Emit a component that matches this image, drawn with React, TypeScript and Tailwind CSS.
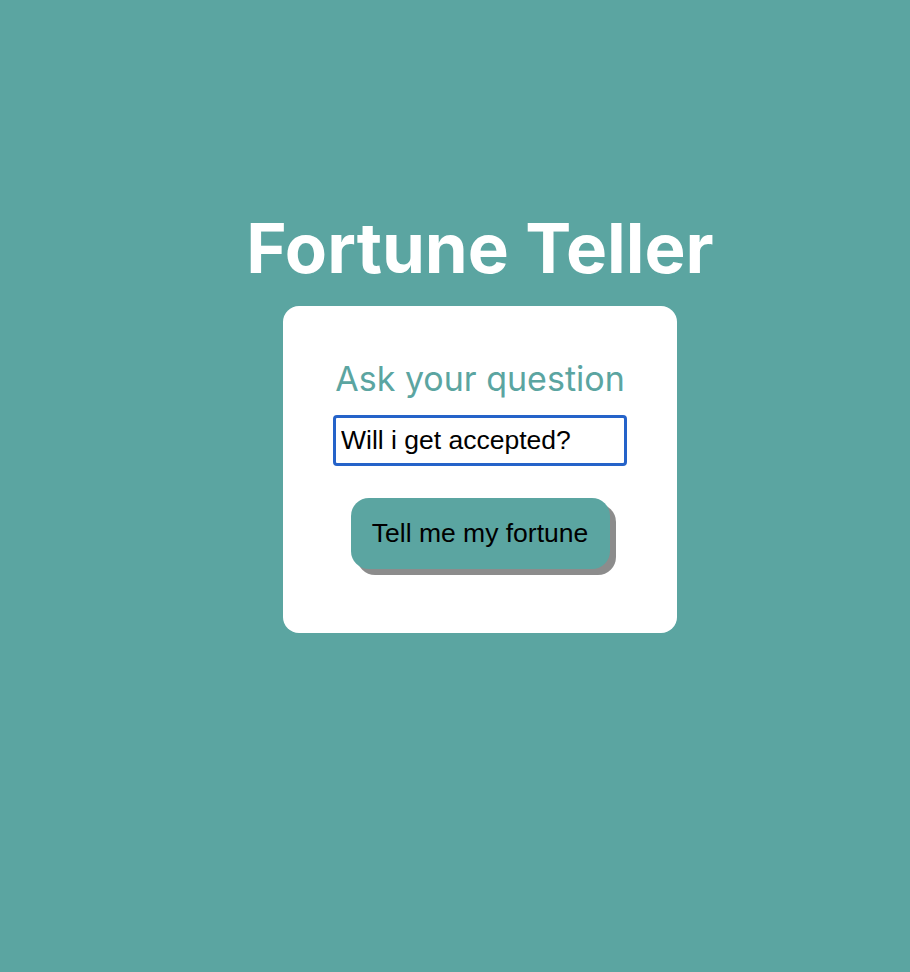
export default function App() {
  return (
    <div className="min-h-screen w-full bg-[#5ba5a1] pl-[50px] pt-[206px]">
      <div className="flex flex-col items-center">
        <h1 className="font-['Inter',sans-serif] text-[69px] font-bold leading-[85px] text-white">
          Fortune Teller
        </h1>
        <div className="mt-[15px] flex w-[394px] flex-col items-center rounded-2xl bg-white pb-[64px] pt-[53px]">
          <h2 className="font-['Inter',sans-serif] text-[34px] leading-[40px] text-[#5ba5a1]">
            Ask your question
          </h2>
          <input
            type="text"
            defaultValue="Will i get accepted?"
            className="mt-[16px] h-[51px] w-[294px] rounded-[4px] border-[3px] border-[#2563c9] px-[5px] font-['Liberation_Sans',Arial,sans-serif] text-[26.5px] text-black outline-none"
          />
          <button className="mt-[32px] h-[71px] w-[259px] rounded-[18px] bg-[#5ba5a1] font-['Liberation_Sans',Arial,sans-serif] text-[26.5px] text-black shadow-[6px_6px_0_#8c8c8c]">
            Tell me my fortune
          </button>
        </div>
      </div>
    </div>
  )
}
